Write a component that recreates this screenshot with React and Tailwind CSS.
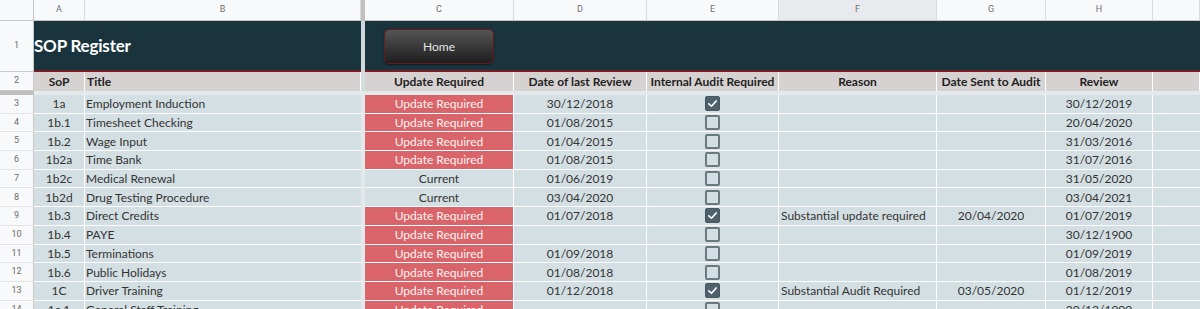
import React from "react";

const FONT = { fontFamily: "Lato, 'Open Sans', sans-serif" };
const HFONT = { fontFamily: "Roboto, Arial, sans-serif" };

const cols = [
  { k: "A", w: "w-[51px]" },
  { k: "B", w: "w-[276px]" },
  { k: "div", w: "w-[4px]" },
  { k: "C", w: "w-[149px]" },
  { k: "D", w: "w-[133px]" },
  { k: "E", w: "w-[132px]" },
  { k: "F", w: "w-[158px]" },
  { k: "G", w: "w-[109px]" },
  { k: "H", w: "w-[107px]" },
  { k: "I", w: "w-[47px]" },
];

const rows = [
  ["3", "1a", "Employment Induction", true, "30/12/2018", true, "", "", "30/12/2019"],
  ["4", "1b.1", "Timesheet Checking", true, "01/08/2015", false, "", "", "20/04/2020"],
  ["5", "1b.2", "Wage Input", true, "01/04/2015", false, "", "", "31/03/2016"],
  ["6", "1b2a", "Time Bank", true, "01/08/2015", false, "", "", "31/07/2016"],
  ["7", "1b2c", "Medical Renewal", false, "01/06/2019", false, "", "", "31/05/2020"],
  ["8", "1b2d", "Drug Testing Procedure", false, "03/04/2020", false, "", "", "03/04/2021"],
  ["9", "1b.3", "Direct Credits", true, "01/07/2018", true, "Substantial update required", "20/04/2020", "01/07/2019"],
  ["10", "1b.4", "PAYE", true, "", false, "", "", "30/12/1900"],
  ["11", "1b.5", "Terminations", true, "01/09/2018", false, "", "", "01/09/2019"],
  ["12", "1b.6", "Public Holidays", true, "01/08/2018", false, "", "", "01/08/2019"],
  ["13", "1C", "Driver Training", true, "01/12/2018", true, "Substantial Audit Required", "03/05/2020", "01/12/2019"],
  ["14", "1c.1", "General Staff Training", true, "", false, "", "", "30/12/1900"],
];

function Check({ on }) {
  if (on) {
    return (
      <div className="w-[15px] h-[15px] rounded-[2px] bg-[#4f626b] border border-[#46585f] flex items-center justify-center">
        <svg width="11" height="11" viewBox="0 0 12 12">
          <polyline points="2,6.3 4.9,9 10,3.2" fill="none" stroke="#ffffff" strokeWidth="1.8" strokeLinecap="round" strokeLinejoin="round" />
        </svg>
      </div>
    );
  }
  return <div className="w-[15px] h-[15px] rounded-[2px] border-2 border-[#6a797f]" />;
}

function RowNum({ n, h, extra = "" }) {
  return (
    <div
      className={`w-[34px] shrink-0 ${h} bg-[#f8f9fa] border-r border-b border-[#c8c8c8] flex items-center justify-center text-[9px] text-[#6b6b6b] ${extra}`}
      style={HFONT}
    >
      {n}
    </div>
  );
}

export default function App() {
  return (
    <div className="w-[1200px] h-[309px] overflow-hidden bg-white" style={FONT}>
      {/* column header */}
      <div className="flex h-[21px]">
        <div className="w-[34px] shrink-0 h-[21px] bg-[#f8f9fa] border-r border-b border-[#c4c4c4]" />
        {cols.map((c) =>
          c.k === "div" ? (
            <div key={c.k} className="w-[4px] shrink-0 h-[21px] bg-[#bfbfbf]" />
          ) : (
            <div
              key={c.k}
              className={`${c.w} shrink-0 h-[21px] border-r border-b border-[#dadada] border-b-[#c4c4c4] flex items-center justify-center text-[9px] text-[#6f6f6f] ${
                c.k === "F" ? "bg-[#e8eaed]" : "bg-[#f8f9fa]"
              }`}
              style={HFONT}
            >
              {c.k === "I" ? "" : c.k}
            </div>
          )
        )}
      </div>

      {/* row 1 */}
      <div className="flex h-[51px]">
        <RowNum n="1" h="h-[51px]" />
        <div className="w-[327px] shrink-0 h-[51px] bg-[#1a343d] border-b-2 border-[#7a1d22] flex items-center">
          <span className="text-white font-bold text-[17px] tracking-[-0.2px]">SOP Register</span>
        </div>
        <div className="w-[4px] shrink-0 h-[51px] bg-[#cfd9dc]" />
        <div className="flex-1 h-[51px] bg-[#1a343d] border-b-2 border-[#7a1d22] flex items-start">
          <div className="ml-[19px] mt-[8px] w-[110px] h-[35px] rounded-[5px] border border-[#6b1a1f] bg-gradient-to-b from-[#555555] to-[#1f1f1f] flex items-center justify-center text-[12px] text-[#e6e6e6] shadow-[0_1px_2px_rgba(0,0,0,0.5)]">
            <span className="mt-[1px]">Home</span>
          </div>
        </div>
      </div>

      {/* row 2 */}
      <div className="flex h-[19px]">
        <RowNum n="2" h="h-[19px]" />
        {[
          ["A", "SoP", "justify-center"],
          ["B", "Title", "justify-start pl-[2px]"],
          ["div", "", ""],
          ["C", "Update Required", "justify-center"],
          ["D", "Date of last Review", "justify-center"],
          ["E", "Internal Audit Required", "justify-center"],
          ["F", "Reason", "justify-center"],
          ["G", "Date Sent to Audit", "justify-center"],
          ["H", "Review", "justify-center"],
          ["I", "", ""],
        ].map(([k, t, al], i) =>
          k === "div" ? (
            <div key={k} className="w-[4px] shrink-0 h-[19px] bg-[#d3dcdf]" />
          ) : (
            <div
              key={k}
              className={`${cols[i].w} shrink-0 h-[19px] bg-[#d6d2d2] border-r border-white flex items-center ${al} text-[12px] font-bold text-[#222] whitespace-nowrap overflow-hidden`}
            >
              {t}
            </div>
          )
        )}
      </div>

      {/* frozen divider */}
      <div className="flex h-[4px]">
        <div className="w-[34px] shrink-0 h-[4px] bg-[#bfbfbf]" />
        <div className="flex-1 h-[4px] bg-[#e4e9eb]" />
      </div>

      {/* body */}
      {rows.map((r) => {
        const [n, sop, title, upd, d, chk, reason, sent, rev] = r;
        return (
          <div key={n} className="flex h-[18.7px]">
            <RowNum n={n} h="h-[18.7px]" extra="border-b-[#e2e2e2]" />
            <div className="w-[51px] shrink-0 h-[18.7px] pt-[1px] bg-[#d4dfe3] border-r border-b border-white flex items-center justify-center text-[12px] text-[#333]">
              {sop}
            </div>
            <div className="w-[276px] shrink-0 h-[18.7px] pt-[1px] bg-[#d4dfe3] border-b border-white flex items-center pl-[1px] text-[12px] text-[#333]">
              {title}
            </div>
            <div className="w-[4px] shrink-0 h-[18.7px] bg-[#e4e9eb]" />
            <div
              className={`w-[149px] shrink-0 h-[18.7px] pt-[1px] border-r border-b border-white flex items-center justify-center text-[12px] ${
                upd ? "bg-[#d96469] text-[#fff3f3]" : "bg-[#d4dfe3] text-[#333]"
              }`}
            >
              {upd ? "Update Required" : "Current"}
            </div>
            <div className="w-[133px] shrink-0 h-[18.7px] pt-[1px] bg-[#d4dfe3] border-r border-b border-white flex items-center justify-center text-[12px] text-[#333]">
              {d}
            </div>
            <div className="w-[132px] shrink-0 h-[18.7px] bg-[#d4dfe3] border-r border-b border-white flex items-center justify-center">
              <Check on={chk} />
            </div>
            <div className="w-[158px] shrink-0 h-[18.7px] pt-[1px] bg-[#d4dfe3] border-r border-b border-white flex items-center pl-[2px] text-[12px] text-[#333] whitespace-nowrap">
              {reason}
            </div>
            <div className="w-[109px] shrink-0 h-[18.7px] pt-[1px] bg-[#d4dfe3] border-r border-b border-white flex items-center justify-center text-[12px] text-[#333]">
              {sent}
            </div>
            <div className="w-[107px] shrink-0 h-[18.7px] pt-[1px] bg-[#d4dfe3] border-r border-b border-white flex items-center justify-center text-[12px] text-[#333]">
              {rev}
            </div>
            <div className="w-[47px] shrink-0 h-[18.7px] bg-[#d4dfe3] border-b border-white" />
          </div>
        );
      })}
    </div>
  );
}
